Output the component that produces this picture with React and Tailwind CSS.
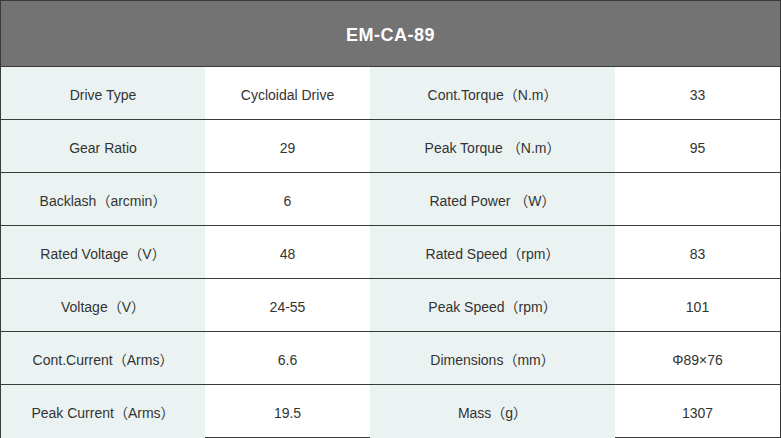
import React from "react";

const rows = [
  ["Drive Type", "Cycloidal Drive", "Cont.Torque（N.m）", "33"],
  ["Gear Ratio", "29", "Peak Torque （N.m）", "95"],
  ["Backlash（arcmin）", "6", "Rated Power （W）", ""],
  ["Rated Voltage（V）", "48", "Rated Speed（rpm）", "83"],
  ["Voltage（V）", "24-55", "Peak Speed（rpm）", "101"],
  ["Cont.Current（Arms）", "6.6", "Dimensions（mm）", "Φ89×76"],
  ["Peak Current（Arms）", "19.5", "Mass（g）", "1307"],
];

const App = () => {
  return (
    <div
      className="w-[781px] h-[438px] bg-white border border-[#3a3a3a] text-[14px] text-[#333]"
      style={{ fontFamily: '"Liberation Sans", "Noto Sans CJK SC", sans-serif' }}
    >
      <div className="h-[66px] pt-[4px] bg-[#737373] border-b border-[#3a3a3a] flex items-center justify-center">
        <span className="text-white text-[18px] font-bold tracking-[0.5px]">EM-CA-89</span>
      </div>
      {rows.map((row, i) => (
        <div
          key={i}
          className="grid grid-cols-[204px_165px_245px_1fr] h-[53px] border-b border-[#3a3a3a] last:border-b-0"
        >
          <div className="bg-[#ebf3f2] pt-[4px] flex items-center justify-center">{row[0]}</div>
          <div className="pt-[4px] flex items-center justify-center">{row[1]}</div>
          <div className="bg-[#ebf3f2] pt-[4px] flex items-center justify-center whitespace-pre">{row[2]}</div>
          <div className="pt-[4px] flex items-center justify-center">{row[3]}</div>
        </div>
      ))}
    </div>
  );
};

export default App;
